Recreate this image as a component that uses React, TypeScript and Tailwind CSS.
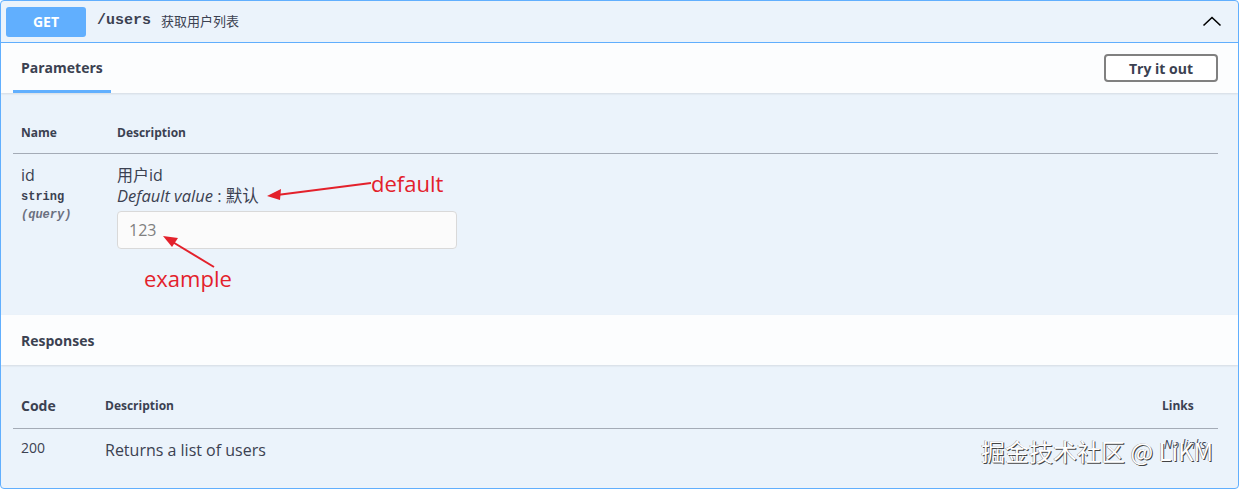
import React from "react";

const sans = "font-['Open_Sans','Noto_Sans','Noto_Sans_CJK_SC',sans-serif]";
const mono = "font-['Liberation_Mono','DejaVu_Sans_Mono',monospace]";

export default function App() {
  return (
    <div className={`w-[1239px] h-[489px] bg-white text-[#3b4151] ${sans}`}>
      <div className="relative flex h-[489px] flex-col overflow-hidden rounded-[4px] border border-[#61affe] bg-[#ebf3fb]">
        {/* Summary */}
        <div className="flex h-[42px] shrink-0 items-center border-b border-[#61affe] px-[5px]">
          <div className="flex h-[30px] w-[80px] items-center justify-center rounded-[3px] bg-[#61affe] text-[14px] font-bold text-white">
            GET
          </div>
          <div className={`ml-[11px] text-[15px] font-semibold text-[#3b4151] ${mono}`}>/users</div>
          <div className="ml-[10px] text-[13px] text-[#3b4151]">获取用户列表</div>
          <svg className="ml-auto mr-[11px]" width="20" height="20" viewBox="0 0 20 20">
            <path d="M1.5 13.5 L10 5.5 L18.5 13.5" fill="none" stroke="#000" strokeWidth="1.6" />
          </svg>
        </div>

        {/* Parameters tab header */}
        <div className="flex h-[50px] shrink-0 items-center justify-between bg-white/85 pl-3 pr-5 shadow-[0_1px_2px_rgba(0,0,0,0.1)]">
          <div className="flex h-full items-center border-b-[3px] border-[#61affe] px-2 pt-[2px] text-[14px] font-bold">
            Parameters
          </div>
          <button className="flex h-[28px] w-[114px] items-center justify-center rounded-[4px] border-2 border-[#808080] bg-white text-[14px] font-bold text-[#3b4151]">
            Try it out
          </button>
        </div>

        {/* Parameters table */}
        <div className="h-[222px] shrink-0 pl-3 pr-5">
          <div className="flex border-b border-[#a4abb6] pb-[12px] pt-[32px] text-[12px] font-bold leading-[16px]">
            <div className="w-[96px] pl-2">Name</div>
            <div className="pl-2">Description</div>
          </div>
          <div className="flex pt-[11px]">
            <div className="w-[96px] pl-2">
              <div className="text-[16px] leading-[20px]">id</div>
              <div className={`mt-1 text-[12px] font-bold leading-[16px] ${mono}`}>string</div>
              <div className={`mt-[2px] text-[12px] font-semibold italic leading-[16px] text-[#6b7080] ${mono}`}>(query)</div>
            </div>
            <div className="pl-2">
              <div className="text-[16px] leading-[20px]">用户id</div>
              <div className="mt-[1px] text-[16.5px] leading-[20px]">
                <i>Default value</i> : 默认
              </div>
              <div className="mt-[5px] flex h-[38px] w-[340px] items-center rounded-[4px] border border-[#d9d9d9] bg-[#fbfbfb] pl-[11px] text-[16px] text-[#808080]">
                123
              </div>
            </div>
          </div>
        </div>

        {/* Responses header */}
        <div className="flex h-[50px] shrink-0 items-center bg-white/85 px-5 text-[14px] font-bold shadow-[0_1px_2px_rgba(0,0,0,0.1)]">
          Responses
        </div>

        {/* Responses table */}
        <div className="pl-3 pr-5">
          <div className="flex items-center border-b border-[#a4abb6] pb-[12px] pt-[31px] leading-[20px]">
            <div className="w-[92px] pl-2 text-[14px] font-bold">Code</div>
            <div className="flex-1 text-[12px] font-bold">Description</div>
            <div className="w-[64px] pl-2 text-[12px] font-bold">Links</div>
          </div>
          <div className="flex items-center pt-[7px]">
            <div className="w-[92px] pl-2 text-[14px] leading-[20px]">200</div>
            <div className="flex-1 pt-[3px] text-[16px] leading-[20px]">Returns a list of users</div>
            <div className="w-[64px] pb-[6px] pl-[10px] text-[12px] italic">No links</div>
          </div>
        </div>

        {/* Red annotations */}
        <svg className="pointer-events-none absolute left-0 top-0" width="1239" height="489">
          <line x1="370" y1="182" x2="276" y2="194" stroke="#e3212b" strokeWidth="2" />
          <polygon points="266,195 280,188 279,199" fill="#e3212b" />
          <line x1="213" y1="266" x2="170" y2="240" stroke="#e3212b" strokeWidth="2" />
          <polygon points="162,235 177,237 171,246" fill="#e3212b" />
        </svg>
        <div className="pointer-events-none absolute left-[370px] top-[167px] text-[22px] leading-[30px] text-[#e3212b]">
          default
        </div>
        <div className="pointer-events-none absolute left-[143px] top-[262px] text-[22px] leading-[30px] text-[#e3212b]">
          example
        </div>

        {/* Watermark */}
        <div className="pointer-events-none absolute left-[980px] top-[434px] font-['Noto_Sans_CJK_SC',sans-serif] text-[24px] leading-[32px] text-white [text-shadow:1px_1px_0_#444,-0.5px_-0.5px_0_#888]">
          掘金技术社区 @ LiKM
        </div>
      </div>
    </div>
  );
}
